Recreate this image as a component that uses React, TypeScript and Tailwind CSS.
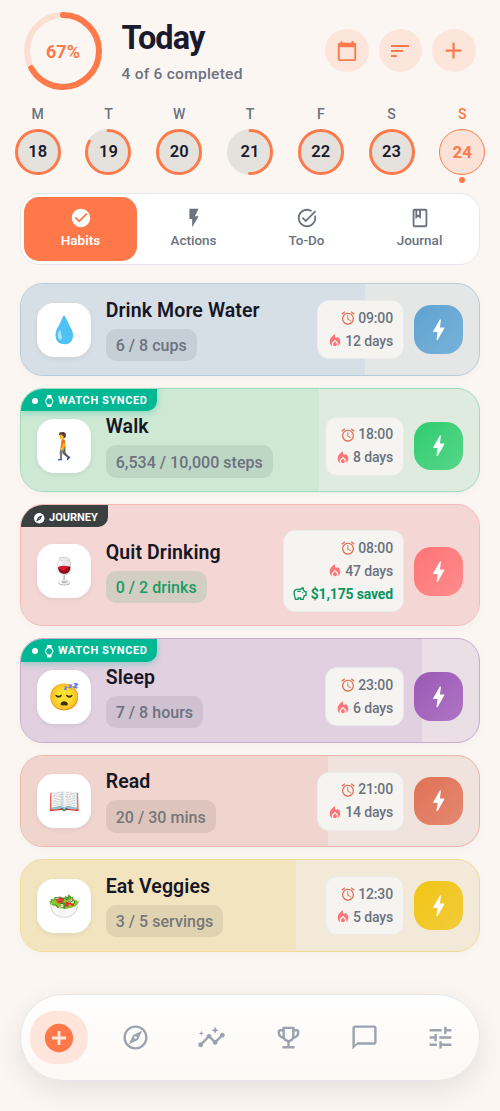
import React from "react";
import {
  MdAdd, MdAddCircle, MdBolt, MdCheckCircle, MdChatBubbleOutline, MdExplore, MdFlashOn, MdInsights,
  MdLocalFireDepartment, MdOutlineBook, MdOutlineEmojiEvents, MdOutlineExplore, MdSort, MdTaskAlt,
  MdTune, MdCalendarToday, MdWatch, MdAccessAlarm, MdOutlineSavings,
} from "react-icons/md";

function Ring({ size, stroke, pct, track, fill = "none" }: { size: number; stroke: number; pct: number; track: string; fill?: string }) {
  const r = (size - stroke) / 2;
  const c = 2 * Math.PI * r;
  return (
    <svg width={size} height={size} className="-rotate-90">
      <circle cx={size / 2} cy={size / 2} r={r} fill={fill} stroke={track} strokeWidth={stroke} />
      <circle cx={size / 2} cy={size / 2} r={r} fill="none" stroke="#ff7a4a" strokeWidth={stroke} strokeLinecap="round" strokeDasharray={`${c * pct} ${c}`} />
    </svg>
  );
}

const days = [
  { l: "M", n: 18, p: 1 }, { l: "T", n: 19, p: 0.83 }, { l: "W", n: 20, p: 1 }, { l: "T", n: 21, p: 0.5 },
  { l: "F", n: 22, p: 1 }, { l: "S", n: 23, p: 1 },
];

const tabs = [
  { label: "Habits", Icon: MdCheckCircle }, { label: "Actions", Icon: MdFlashOn },
  { label: "To-Do", Icon: MdTaskAlt }, { label: "Journal", Icon: MdOutlineBook },
];

type Habit = {
  name: string; amount: string; emoji: string; time: string; streak: string; saved?: string;
  badge?: "watch" | "journey"; card: string; bar: string; pill: string; button: string;
};

const habits: Habit[] = [
  { name: "Drink More Water", amount: "6 / 8 cups", emoji: "💧", time: "09:00", streak: "12 days", card: "h-[92.5px] bg-[#e5e7e6] border-[#b5ccd9]", bar: "w-[75%] bg-[#d6dfe5]", pill: "bg-[#c6cfd5] text-[#6b7280]", button: "from-[#5fa3d0] to-[#77b2da]" },
  { name: "Walk", amount: "6,534 / 10,000 steps", emoji: "🚶", time: "18:00", streak: "8 days", badge: "watch", card: "h-[104.5px] bg-[#e0ebe0] border-[#a3dcb8]", bar: "w-[65%] bg-[#cde8d3]", pill: "bg-[#bed6c4] text-[#6b7280]", button: "from-[#2ecc71] to-[#55d689]" },
  { name: "Quit Drinking", amount: "0 / 2 drinks", emoji: "🍷", time: "08:00", streak: "47 days", saved: "$1,175 saved", badge: "journey", card: "h-[122px] bg-[#f4d7d4] border-[#f7b9b8]", bar: "w-full bg-[#f4d7d4]", pill: "bg-[#d2cfc2] text-[#1c9a68]", button: "from-[#ff7577] to-[#ff8b8b]" },
  { name: "Sleep", amount: "7 / 8 hours", emoji: "😴", time: "23:00", streak: "6 days", badge: "watch", card: "h-[104.5px] bg-[#eadfe5] border-[#c9aad0]", bar: "w-[87.5%] bg-[#e0d0e0]", pill: "bg-[#cfc1d0] text-[#6b7280]", button: "from-[#9b59b6] to-[#ae74c3]" },
  { name: "Read", amount: "20 / 30 mins", emoji: "📖", time: "21:00", streak: "14 days", card: "h-[92.5px] bg-[#f0e2dc] border-[#ecb7a8]", bar: "w-[67%] bg-[#efd5ce]", pill: "bg-[#ddc5be] text-[#777579]", button: "from-[#e07255] to-[#e58871]" },
  { name: "Eat Veggies", amount: "3 / 5 servings", emoji: "🥗", time: "12:30", streak: "5 days", card: "h-[92.5px] bg-[#f2e9d8] border-[#efdd96]", bar: "w-[60%] bg-[#f2e4bf]", pill: "bg-[#e0d3b1] text-[#777779]", button: "from-[#f1c40f] to-[#f2cc38]" },
];

function Badge({ kind }: { kind: "watch" | "journey" }) {
  if (kind === "watch") {
    return (
      <div className="absolute left-0 top-0 flex h-[22.5px] w-[136px] items-center rounded-br-[10px] bg-[#00b894] pl-[10.5px] pt-[1.5px] text-[11px] font-bold tracking-[0.6px] text-white shadow-[0_2px_6px_rgba(0,184,148,0.35)]">
        <span className="mr-[5px] size-[6px] rounded-full bg-white" />
        <MdWatch className="mr-[3px] size-[12.5px]" />
        <span className="whitespace-nowrap">WATCH SYNCED</span>
      </div>
    );
  }
  return (
    <div className="absolute left-0 top-0 flex h-[22px] w-[87px] items-center rounded-br-[10px] bg-[#3a3f40] pl-[12px] pt-[3px] text-[11px] font-bold text-white">
      <MdExplore className="mr-[3.5px] size-[12.5px]" />
      JOURNEY
    </div>
  );
}

function HabitCard({ h }: { h: Habit }) {
  return (
    <div className={`relative shrink-0 overflow-hidden rounded-[23px] border-[1.5px] shadow-[0_2px_8px_rgba(0,0,0,0.03)] ${h.card}`}>
      <div className={`absolute inset-y-0 left-0 ${h.bar}`} />
      {h.badge && <Badge kind={h.badge} />}
      <div className={`relative flex h-full items-center pl-[16.2px] pr-[16.5px] ${h.badge ? "pt-3" : ""}`}>
        <div className="flex size-[54px] shrink-0 items-center justify-center rounded-[17px] bg-white text-[26px] leading-none shadow-[0_2px_5px_rgba(0,0,0,0.06)]">
          {h.emoji}
        </div>
        <div className="ml-[14.5px] flex flex-col items-start">
          <div className="whitespace-nowrap text-[19.5px] font-semibold leading-[25px] tracking-[0.1px] text-[#171625]">{h.name}</div>
          <div className={`mt-[6px] flex h-[32.5px] items-center whitespace-nowrap rounded-[10px] px-[10px] pt-[2px] text-[16px] font-medium tracking-[0.03px] ${h.pill}`}>{h.amount}</div>
        </div>
        <div className="ml-auto flex shrink-0 flex-col items-end rounded-[12px] border border-[#e8eaec] bg-[#f5f4f1] py-[5.5px] pl-[8.5px] pr-[9.5px] text-[14px] font-medium leading-[23px] tracking-[-0.15px] text-[#6b7280]">
          <div className="flex items-center gap-[2.5px]"><MdAccessAlarm className="size-[16px] text-[#e17055]" />{h.time}</div>
          <div className="flex items-center gap-[2.5px]"><MdLocalFireDepartment className="size-[16px] text-[#ff7577]" />{h.streak}</div>
          {h.saved && <div className="flex items-center gap-[2.5px] font-bold text-[#0b9562]"><MdOutlineSavings className="size-[16px]" />{h.saved}</div>}
        </div>
        <div className={`ml-[10.5px] flex size-[48.5px] shrink-0 items-center justify-center rounded-[17px] bg-gradient-to-br ${h.button}`}>
          <MdBolt className="size-[27.5px] text-white" />
        </div>
      </div>
    </div>
  );
}

const nav = [MdOutlineExplore, MdInsights, MdOutlineEmojiEvents, MdChatBubbleOutline, MdTune];

export default function App() {
  return (
    <div className="flex h-[1111px] w-[500px] flex-col overflow-hidden bg-[#fcf6f2] font-['Roboto','Noto_Color_Emoji',sans-serif]">
      <header className="flex h-[101px] shrink-0 items-center pl-[24px] pr-[24.5px]">
        <div className="grid place-items-center">
          <div className="col-start-1 row-start-1"><Ring size={78} stroke={6} pct={0.67} track="#fcdfd3" /></div>
          <span className="relative col-start-1 row-start-1 pt-[1px] text-[18px] font-bold text-[#f97b4f]">67%</span>
        </div>
        <div className="ml-[19.5px] pt-[2px]">
          <h1 className="text-[32.5px] font-bold leading-[38px] tracking-[-0.95px] text-[#1a1a2e]">Today</h1>
          <p className="mt-[7px] text-[15.5px] font-medium leading-[20px] tracking-[0.26px] text-[#6b7280]">4 of 6 completed</p>
        </div>
        <div className="ml-auto flex gap-[10px] text-[#f97b4f]">
          {[MdCalendarToday, MdSort, MdAdd].map((Icon, i) => (
            <button key={i} className="flex size-[43.5px] items-center justify-center rounded-full bg-[#fce5da]">
              <Icon className={i === 0 ? "size-[22px]" : i === 1 ? "size-[24px]" : "size-[27px]"} />
            </button>
          ))}
        </div>
      </header>

      <div className="grid h-[91.5px] shrink-0 grid-cols-7 px-[2.3px]">
        {days.map((d) => (
          <div key={d.n} className="flex flex-col items-center pt-[4px]">
            <span className="text-[14px] font-medium leading-[18px] text-[#6b7280]">{d.l}</span>
            <div className="mt-[6px] grid place-items-center">
              <div className="col-start-1 row-start-1"><Ring size={46} stroke={3} pct={d.p} track="#e5e2dd" fill="#e5e2dd" /></div>
              <span className="relative col-start-1 row-start-1 pt-[1.5px] text-[16.5px] font-semibold text-[#1a1a2e]">{d.n}</span>
            </div>
          </div>
        ))}
        <div className="flex flex-col items-center pt-[4px] text-[#f97b4f]">
          <span className="text-[14px] font-semibold leading-[18px]">S</span>
          <div className="mt-[6px] flex size-[46px] items-center justify-center rounded-full border-[1.5px] border-[#f97b4f] bg-[#fce2d6] pt-[1px] text-[17px] font-bold">24</div>
          <span className="mt-[1.5px] size-[6px] rounded-full bg-[#ff7a4a]" />
        </div>
      </div>

      <div className="mx-5 flex h-[72.5px] shrink-0 rounded-[20px] border border-[#e5e7eb] bg-white p-[3px]">
        {tabs.map(({ label, Icon }, i) => (
          <div key={label} className={`flex flex-1 flex-col items-center rounded-[15px] pt-[10px] ${i === 0 ? "bg-[#ff7849] font-semibold text-white" : "font-medium text-[#6b7280]"}`}>
            <Icon className="size-[22px]" />
            <span className="mt-[2px] text-[13.5px] leading-[18px]">{label}</span>
          </div>
        ))}
      </div>

      <main className="mx-5 mt-[18.4px] flex shrink-0 flex-col gap-[12px]">
        {habits.map((h) => <HabitCard key={h.name} h={h} />)}
      </main>

      <nav className="mx-5 mt-[42.4px] flex h-[86.5px] shrink-0 items-center rounded-[43px] border border-[#e5e7eb] bg-gradient-to-b from-white to-[#fcf8f4] text-[#9ca3af] shadow-[0_9px_28px_rgba(0,0,0,0.09)]">
        <div className="flex flex-1 justify-center">
          <div className="flex h-[53px] w-[58px] items-center justify-center rounded-[25px] bg-[#fee5dc]">
            <MdAddCircle className="size-[34px] text-[#ff7849]" />
          </div>
        </div>
        {nav.map((Icon, i) => (
          <div key={i} className="flex flex-1 justify-center"><Icon className="size-[29px]" /></div>
        ))}
      </nav>
    </div>
  );
}
